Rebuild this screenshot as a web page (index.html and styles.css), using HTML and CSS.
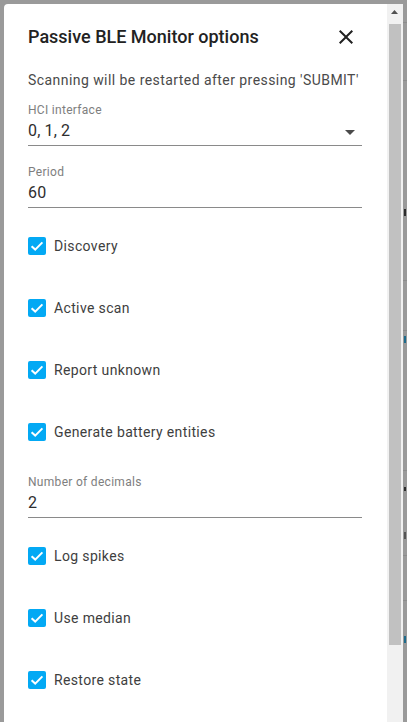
FILE: index.html
```html
<!DOCTYPE html>
<html lang="en">
<head>
<meta charset="utf-8">
<title>Passive BLE Monitor options</title>
<link rel="stylesheet" href="styles.css">
</head>
<body>
<div class="backdrop">
  <span class="bg-line l1"></span>
  <span class="bg-line l2"></span>
  <span class="bg-line l3"></span>
  <span class="bg-line l4"></span>
  <span class="bg-line l5"></span>
  <span class="bg-line l6"></span>
  <span class="bg-line l7"></span>
  <span class="bg-mark m1"></span>
  <span class="bg-mark blue m2"></span>
  <span class="bg-mark m3"></span>
  <span class="bg-mark m4"></span>
  <span class="bg-mark blue m5"></span>
</div>

<div class="dialog">
  <div class="dialog-body">
    <div class="header">
      <h2 class="title">Passive BLE Monitor options</h2>
      <svg class="close" viewBox="0 0 24 24" width="24" height="24" aria-label="Close">
        <path d="M19,6.41L17.59,5L12,10.59L6.41,5L5,6.41L10.59,12L5,17.59L6.41,19L12,13.41L17.59,19L19,17.59L13.41,12L19,6.41Z"/>
      </svg>
    </div>
    <p class="desc">Scanning will be restarted after pressing 'SUBMIT'</p>

    <div class="form">
      <div class="field">
        <div class="label">HCI interface</div>
        <div class="value-row">
          <span class="value">0, 1, 2</span>
          <svg class="arrow" viewBox="0 0 10 5" width="10" height="5"><path d="M0 0H10L5 5Z"/></svg>
        </div>
      </div>

      <div class="field">
        <div class="label">Period</div>
        <div class="value-row"><span class="value">60</span></div>
      </div>

      <div class="check"><span class="box"><svg viewBox="0 0 18 18"><polyline points="3.6,9.2 7.2,12.6 14.4,5.4"/></svg></span><span class="check-label">Discovery</span></div>
      <div class="check"><span class="box"><svg viewBox="0 0 18 18"><polyline points="3.6,9.2 7.2,12.6 14.4,5.4"/></svg></span><span class="check-label">Active scan</span></div>
      <div class="check"><span class="box"><svg viewBox="0 0 18 18"><polyline points="3.6,9.2 7.2,12.6 14.4,5.4"/></svg></span><span class="check-label">Report unknown</span></div>
      <div class="check"><span class="box"><svg viewBox="0 0 18 18"><polyline points="3.6,9.2 7.2,12.6 14.4,5.4"/></svg></span><span class="check-label">Generate battery entities</span></div>

      <div class="field">
        <div class="label">Number of decimals</div>
        <div class="value-row"><span class="value">2</span></div>
      </div>

      <div class="check"><span class="box"><svg viewBox="0 0 18 18"><polyline points="3.6,9.2 7.2,12.6 14.4,5.4"/></svg></span><span class="check-label">Log spikes</span></div>
      <div class="check"><span class="box"><svg viewBox="0 0 18 18"><polyline points="3.6,9.2 7.2,12.6 14.4,5.4"/></svg></span><span class="check-label">Use median</span></div>
      <div class="check"><span class="box"><svg viewBox="0 0 18 18"><polyline points="3.6,9.2 7.2,12.6 14.4,5.4"/></svg></span><span class="check-label">Restore state</span></div>
    </div>
  </div>

  <div class="scrollbar">
    <svg class="scroll-up" viewBox="0 0 7 4" width="7" height="4"><path d="M0 4H7L3.5 0Z"/></svg>
    <div class="thumb"></div>
  </div>
</div>
</body>
</html>
```

FILE: styles.css
```css
* { box-sizing: border-box; }

html, body {
  margin: 0;
  height: 100%;
  overflow: hidden;
}

body {
  background: #9a9a9a;
  font-family: Roboto, "Noto Sans", "Liberation Sans", sans-serif;
  position: relative;
}

/* dimmed page behind the modal */
.backdrop {
  position: absolute;
  inset: 0;
}
.bg-line {
  position: absolute;
  left: 403px;
  width: 4px;
  height: 1px;
  background: #8c8c8c;
}
.l1 { top: 22px; }
.l2 { top: 80px; }
.l3 { top: 280px; }
.l4 { top: 330px; }
.l5 { top: 470px; }
.l6 { top: 555px; }
.l7 { top: 600px; }
.bg-mark {
  position: absolute;
  left: 404px;
  width: 2px;
  height: 7px;
  background: #2c2c2c;
}
.bg-mark.blue { background: #1d6b8c; }
.m1 { top: 209px; }
.m2 { top: 336px; }
.m3 { top: 487px; height: 4px; }
.m4 { top: 532px; background: #555; }
.m5 { top: 636px; }

/* modal dialog */
.dialog {
  position: absolute;
  left: 4px;
  top: 4px;
  width: 399px;
  height: 760px;
  background: #fff;
  border-radius: 4px 0 0 0;
  display: flex;
  overflow: hidden;
}

.dialog-body {
  flex: 1;
  padding: 20px 25px 0 24px;
}

.header {
  display: flex;
  align-items: center;
  justify-content: space-between;
  height: 25px;
}
.title {
  margin: 0;
  font-size: 18px;
  font-weight: 500;
  line-height: 24px;
  color: #222;
  letter-spacing: 0;
}
.close {
  width: 24px;
  height: 24px;
  margin-right: 4px;
  fill: #212121;
  flex: none;
}

.desc {
  margin: 21px 0 0;
  font-size: 14px;
  line-height: 20px;
  letter-spacing: 0.44px;
  color: #4a4a4a;
}

.form {
  display: flex;
  flex-direction: column;
  margin-top: 12px;
}

.field {
  height: 44px;
  border-bottom: 1px solid #8a8a8a;
  margin-bottom: 7px;
}
.field + .field { margin-top: 11px; }
.check + .field { margin-top: 11px; }

.label {
  font-size: 12px;
  line-height: 16px;
  letter-spacing: 0.3px;
  color: #7e7e7e;
}
.value-row {
  display: flex;
  align-items: center;
  justify-content: space-between;
  height: 24px;
  margin-top: 1px;
}
.value {
  font-size: 16px;
  line-height: 24px;
  letter-spacing: 0.15px;
  color: #2e2e2e;
}
.arrow {
  fill: #4a4a4a;
  margin-right: 7px;
  margin-top: 2px;
}

.check {
  height: 62px;
  display: flex;
  align-items: center;
  gap: 8px;
}
.box {
  width: 18px;
  height: 18px;
  border-radius: 2px;
  background: #03a9f4;
  display: flex;
  flex: none;
}
.box svg {
  width: 18px;
  height: 18px;
  fill: none;
  stroke: #fff;
  stroke-width: 2;
}
.check-label {
  font-size: 14px;
  line-height: 20px;
  letter-spacing: 0.36px;
  color: #3e3e3e;
}

/* scrollbar */
.scrollbar {
  width: 16px;
  flex: none;
  background: #f1f1f1;
  position: relative;
}
.scroll-up {
  position: absolute;
  left: 4px;
  top: 6px;
  fill: #505050;
}
.thumb {
  position: absolute;
  left: 2px;
  top: 20px;
  width: 12px;
  height: 621px;
  background: #c1c1c1;
}
```
